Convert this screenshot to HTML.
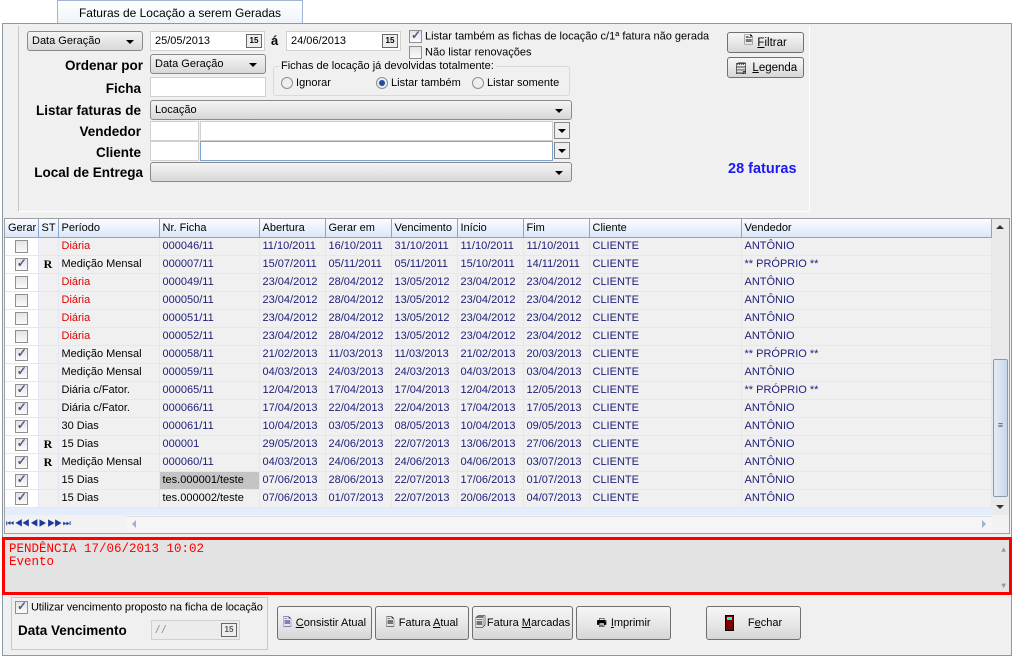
<!DOCTYPE html>
<html><head><meta charset="utf-8"><style>
*{box-sizing:border-box;margin:0;padding:0}
body{width:1013px;height:658px;background:#fff;font-family:"Liberation Sans",sans-serif;font-size:11px;color:#000;position:relative;overflow:hidden}
.a{position:absolute}
.lbl{position:absolute;font-weight:bold;font-size:13.5px;text-align:right}
.inp{position:absolute;background:#fff;border:1px solid #d0d0d0;height:20px;padding:3px 4px}
.cb{position:absolute;background:linear-gradient(#f4f4f4,#d8d8d8);border:1px solid #8a8a8a;border-radius:3px;height:20px;padding:3px 4px}
.cb:after{content:"";position:absolute;right:8px;top:8px;border:4px solid transparent;border-top:4px solid #000;border-bottom:0}
.btn{position:absolute;background:linear-gradient(#f6f6f6 0%,#e8e8e8 50%,#d6d6d6 100%);border:1px solid #707070;border-radius:3px;display:flex;align-items:center;justify-content:center;font-size:11.5px;white-space:nowrap}
.btn .ic{margin-right:4px}
.chk{display:inline-block;width:13px;height:13px;border:1px solid #8f8f8f;background:linear-gradient(#e4e4e4,#fafafa);vertical-align:middle;position:relative}
.chk.on:after{content:"✓";position:absolute;left:1px;top:-3px;font-size:12px;color:#4a5a8a;font-weight:bold}
.rad{display:inline-block;width:12px;height:12px;border:1px solid #8f8f8f;border-radius:50%;background:#eee;vertical-align:middle;position:relative}
.rad.on:after{content:"";position:absolute;left:2px;top:2px;width:6px;height:6px;border-radius:50%;background:#1d4fa0}
table{border-collapse:collapse;table-layout:fixed}
td{height:18px;border-bottom:1px solid #dfe8f4;border-right:1px solid #dfe8f4;padding:0 3px;white-space:nowrap;overflow:hidden;color:#20207a;font-size:11px}
th{height:18px;font-weight:normal;text-align:left;padding:0 3px;border-right:1px solid #8aa4cc;background:linear-gradient(#fafcff,#dbe7f8);border-bottom:1px solid #8aa4cc;font-size:11px}
td.g{background:#fff;text-align:center}
td.p{color:#000}
td.r{color:#e00000}
td.s{font-family:"Liberation Serif",serif;font-weight:bold;font-size:12px;color:#000;text-align:center}
.cal{position:absolute;right:2px;top:2px;width:16px;height:14px;border:1px solid #666;background:#eee;font-size:8px;text-align:center;line-height:12px;font-weight:bold}
.t{font-size:11px}
</style></head><body>
<div class="a" style="left:57px;top:0;width:246px;height:24px;border:1px solid #9fb4cf;border-bottom:none;background:linear-gradient(#fff,#eef3fa);font-size:12px;text-align:center;padding-top:5px">Faturas de Locação a serem Geradas</div>
<div class="a" style="left:2px;top:23px;width:1010px;height:633px;border:1px solid #8c98a8;background:#f0f0f0"></div>
<div class="a" style="left:18px;top:26px;width:792px;height:186px;border-left:1px solid #c8c8c8;border-right:1px solid #fff;border-bottom:1px solid #fff"></div>
<div class="cb" style="left:27px;top:31px;width:116px">Data Geração</div>
<div class="inp" style="left:150px;top:31px;width:115px">25/05/2013<span class="cal">15</span></div>
<div class="a" style="left:271px;top:33px;font-weight:bold;font-size:13px">á</div>
<div class="inp" style="left:286px;top:31px;width:115px">24/06/2013<span class="cal">15</span></div>
<div class="a t" style="left:409px;top:30px"><span class="chk on"></span> Listar também as fichas de locação c/1ª fatura não gerada</div>
<div class="a t" style="left:409px;top:46px"><span class="chk"></span> Não listar renovações</div>
<div class="lbl" style="left:20px;top:58px;width:123px">Ordenar por</div>
<div class="cb" style="left:150px;top:54px;width:116px">Data Geração</div>
<div class="a" style="left:273px;top:66px;width:297px;height:30px;border:1px solid #d8d8d8;border-radius:3px"></div>
<div class="a t" style="left:279px;top:60px;background:#f0f0f0;padding:0 2px">Fichas de locação já devolvidas totalmente:</div>
<div class="a t" style="left:281px;top:77px"><span class="rad"></span> Ignorar</div>
<div class="a t" style="left:376px;top:77px"><span class="rad on"></span> Listar também</div>
<div class="a t" style="left:472px;top:77px"><span class="rad"></span> Listar somente</div>
<div class="lbl" style="left:20px;top:81px;width:121px">Ficha</div>
<div class="inp" style="left:150px;top:77px;width:116px"></div>
<div class="lbl" style="left:20px;top:103px;width:121px">Listar faturas de</div>
<div class="cb" style="left:150px;top:100px;width:422px">Locação</div>
<div class="lbl" style="left:20px;top:124px;width:121px">Vendedor</div>
<div class="inp" style="left:150px;top:121px;width:49px"></div>
<div class="inp" style="left:200px;top:121px;width:353px"></div>
<div class="a" style="left:554px;top:122px;width:16px;height:17px;border:1px solid #888;background:#eee"><div style="margin:6px 3px;border:4px solid transparent;border-top:4px solid #000;border-bottom:0;width:0"></div></div>
<div class="lbl" style="left:20px;top:145px;width:121px">Cliente</div>
<div class="inp" style="left:150px;top:141px;width:49px"></div>
<div class="inp" style="left:200px;top:141px;width:353px;border-color:#7ea4d0"></div>
<div class="a" style="left:554px;top:142px;width:16px;height:17px;border:1px solid #888;background:#eee"><div style="margin:6px 3px;border:4px solid transparent;border-top:4px solid #000;border-bottom:0;width:0"></div></div>
<div class="lbl" style="left:20px;top:165px;width:123px">Local de Entrega</div>
<div class="cb" style="left:150px;top:162px;width:422px"></div>
<div class="btn" style="left:727px;top:32px;width:77px;height:21px"><span class="ic">🗎</span><span><u>F</u>iltrar</span></div>
<div class="btn" style="left:727px;top:57px;width:77px;height:21px"><span class="ic">🗒</span><span><u>L</u>egenda</span></div>
<div class="a" style="left:728px;top:161px;font-weight:bold;font-size:14.5px;color:#1a1af0">28 faturas</div>
<div class="a" style="left:4px;top:218px;width:1006px;height:316px;border:1px solid #a0a0a0;background:#e6eefa"></div>
<div class="a" style="left:5px;top:219px;width:987px;height:296px;overflow:hidden;background:#e3edfb">
<table style="width:986px">
<colgroup><col style="width:33px"><col style="width:20px"><col style="width:101px"><col style="width:100px"><col style="width:66px"><col style="width:66px"><col style="width:66px"><col style="width:66px"><col style="width:66px"><col style="width:152px"><col style="width:250px"></colgroup>
<tr><th>Gerar</th><th>ST</th><th>Período</th><th>Nr. Ficha</th><th>Abertura</th><th>Gerar em</th><th>Vencimento</th><th>Início</th><th>Fim</th><th>Cliente</th><th>Vendedor</th></tr>
<tbody style="background:#f0f0f0">
<tr><td class="g"><span class="chk"></span></td><td class="s"></td><td class="r">Diária</td><td>000046/11</td><td>11/10/2011</td><td>16/10/2011</td><td>31/10/2011</td><td>11/10/2011</td><td>11/10/2011</td><td>CLIENTE</td><td>ANTÔNIO</td></tr>
<tr><td class="g"><span class="chk on"></span></td><td class="s">R</td><td class="p">Medição Mensal</td><td>000007/11</td><td>15/07/2011</td><td>05/11/2011</td><td>05/11/2011</td><td>15/10/2011</td><td>14/11/2011</td><td>CLIENTE</td><td>** PRÓPRIO **</td></tr>
<tr><td class="g"><span class="chk"></span></td><td class="s"></td><td class="r">Diária</td><td>000049/11</td><td>23/04/2012</td><td>28/04/2012</td><td>13/05/2012</td><td>23/04/2012</td><td>23/04/2012</td><td>CLIENTE</td><td>ANTÔNIO</td></tr>
<tr><td class="g"><span class="chk"></span></td><td class="s"></td><td class="r">Diária</td><td>000050/11</td><td>23/04/2012</td><td>28/04/2012</td><td>13/05/2012</td><td>23/04/2012</td><td>23/04/2012</td><td>CLIENTE</td><td>ANTÔNIO</td></tr>
<tr><td class="g"><span class="chk"></span></td><td class="s"></td><td class="r">Diária</td><td>000051/11</td><td>23/04/2012</td><td>28/04/2012</td><td>13/05/2012</td><td>23/04/2012</td><td>23/04/2012</td><td>CLIENTE</td><td>ANTÔNIO</td></tr>
<tr><td class="g"><span class="chk"></span></td><td class="s"></td><td class="r">Diária</td><td>000052/11</td><td>23/04/2012</td><td>28/04/2012</td><td>13/05/2012</td><td>23/04/2012</td><td>23/04/2012</td><td>CLIENTE</td><td>ANTÔNIO</td></tr>
<tr><td class="g"><span class="chk on"></span></td><td class="s"></td><td class="p">Medição Mensal</td><td>000058/11</td><td>21/02/2013</td><td>11/03/2013</td><td>11/03/2013</td><td>21/02/2013</td><td>20/03/2013</td><td>CLIENTE</td><td>** PRÓPRIO **</td></tr>
<tr><td class="g"><span class="chk on"></span></td><td class="s"></td><td class="p">Medição Mensal</td><td>000059/11</td><td>04/03/2013</td><td>24/03/2013</td><td>24/03/2013</td><td>04/03/2013</td><td>03/04/2013</td><td>CLIENTE</td><td>ANTÔNIO</td></tr>
<tr><td class="g"><span class="chk on"></span></td><td class="s"></td><td class="p">Diária c/Fator.</td><td>000065/11</td><td>12/04/2013</td><td>17/04/2013</td><td>17/04/2013</td><td>12/04/2013</td><td>12/05/2013</td><td>CLIENTE</td><td>** PRÓPRIO **</td></tr>
<tr><td class="g"><span class="chk on"></span></td><td class="s"></td><td class="p">Diária c/Fator.</td><td>000066/11</td><td>17/04/2013</td><td>22/04/2013</td><td>22/04/2013</td><td>17/04/2013</td><td>17/05/2013</td><td>CLIENTE</td><td>ANTÔNIO</td></tr>
<tr><td class="g"><span class="chk on"></span></td><td class="s"></td><td class="p">30 Dias</td><td>000061/11</td><td>10/04/2013</td><td>03/05/2013</td><td>08/05/2013</td><td>10/04/2013</td><td>09/05/2013</td><td>CLIENTE</td><td>ANTÔNIO</td></tr>
<tr><td class="g"><span class="chk on"></span></td><td class="s">R</td><td class="p">15 Dias</td><td>000001</td><td>29/05/2013</td><td>24/06/2013</td><td>22/07/2013</td><td>13/06/2013</td><td>27/06/2013</td><td>CLIENTE</td><td>ANTÔNIO</td></tr>
<tr><td class="g"><span class="chk on"></span></td><td class="s">R</td><td class="p">Medição Mensal</td><td>000060/11</td><td>04/03/2013</td><td>24/06/2013</td><td>24/06/2013</td><td>04/06/2013</td><td>03/07/2013</td><td>CLIENTE</td><td>ANTÔNIO</td></tr>
<tr><td class="g"><span class="chk on"></span></td><td class="s"></td><td class="p">15 Dias</td><td style="background:#c4c4c4;color:#000">tes.000001/teste</td><td>07/06/2013</td><td>28/06/2013</td><td>22/07/2013</td><td>17/06/2013</td><td>01/07/2013</td><td>CLIENTE</td><td>ANTÔNIO</td></tr>
<tr><td class="g"><span class="chk on"></span></td><td class="s"></td><td class="p">15 Dias</td><td style="color:#000">tes.000002/teste</td><td>07/06/2013</td><td>01/07/2013</td><td>22/07/2013</td><td>20/06/2013</td><td>04/07/2013</td><td>CLIENTE</td><td>ANTÔNIO</td></tr>
</tbody></table></div>
<div class="a" style="left:992px;top:219px;width:17px;height:296px;background:#eaeaea">
<div class="a" style="left:4px;top:6px;border:4px solid transparent;border-bottom:4px solid #333;border-top:0"></div>
<div class="a" style="left:1px;top:140px;width:15px;height:138px;border:1px solid #8a98b0;border-radius:2px;background:linear-gradient(90deg,#e6ecf5,#c9d6ea);font-size:9px;text-align:center;line-height:130px;color:#555">≡</div>
<div class="a" style="left:4px;top:286px;border:4px solid transparent;border-top:4px solid #333;border-bottom:0"></div>
</div>
<div class="a" style="left:5px;top:515px;width:1004px;height:18px;background:#f2f2f2"></div>
<div class="a" style="left:6px;top:518px;font-size:9px;color:#1a3aa0;letter-spacing:-1px">⏮ ◀◀ ◀ ▶ ▶▶ ⏭</div>
<div class="a" style="left:127px;top:516px;width:865px;height:17px;background:#f5f5f5;border-top:1px solid #e0e0e0"></div>
<div class="a" style="left:132px;top:520px;border:4px solid transparent;border-right:4px solid #a0b0d0;border-left:0"></div>
<div class="a" style="left:982px;top:520px;border:4px solid transparent;border-left:4px solid #a0b0d0;border-right:0"></div>
<div class="a" style="left:2px;top:537px;width:1010px;height:58px;border:3px solid #f00;background:#e3e3e3;font-family:'Liberation Mono',monospace;font-size:12.5px;color:#f00;line-height:13px;padding:3px 4px">PENDÊNCIA 17/06/2013 10:02<br>Evento
<div class="a" style="right:3px;top:4px;color:#999;font-size:8px">▲</div><div class="a" style="right:3px;top:40px;color:#999;font-size:8px">▼</div></div>
<div class="a" style="left:11px;top:597px;width:257px;height:53px;border:1px solid #c8c8c8"></div>
<div class="a t" style="left:15px;top:601px;letter-spacing:-0.1px"><span class="chk on"></span> Utilizar vencimento proposto na ficha de locação</div>
<div class="a" style="left:18px;top:623px;font-weight:bold;font-size:13.5px">Data Vencimento</div>
<div class="inp" style="left:151px;top:620px;width:89px;background:#ececec;color:#888;font-style:italic">/ /<span class="cal" style="font-style:normal;color:#555">15</span></div>
<div class="btn" style="left:277px;top:606px;width:95px;height:34px;font-size:11px"><span class="ic" style="color:#1a1a80">🗎</span><span><u>C</u>onsistir Atual</span></div>
<div class="btn" style="left:375px;top:606px;width:94px;height:34px;font-size:11px"><span class="ic">🗎</span><span>Fatura <u>A</u>tual</span></div>
<div class="btn" style="left:472px;top:606px;width:101px;height:34px;font-size:11px"><span class="ic" style="margin-right:1px">🗐</span><span>Fatura <u>M</u>arcadas</span></div>
<div class="btn" style="left:576px;top:606px;width:95px;height:34px;font-size:11px"><span class="ic">🖶</span><span><u>I</u>mprimir</span></div>
<div class="btn" style="left:706px;top:606px;width:95px;height:34px;font-size:11px"><span style="display:inline-block;width:9px;height:16px;background:#7a0000;border:1px solid #000;position:relative;margin-right:14px"><span style="position:absolute;left:1px;top:1px;width:5px;height:3px;background:#0ff"></span></span><span>F<u>e</u>char</span></div>
</body></html>
